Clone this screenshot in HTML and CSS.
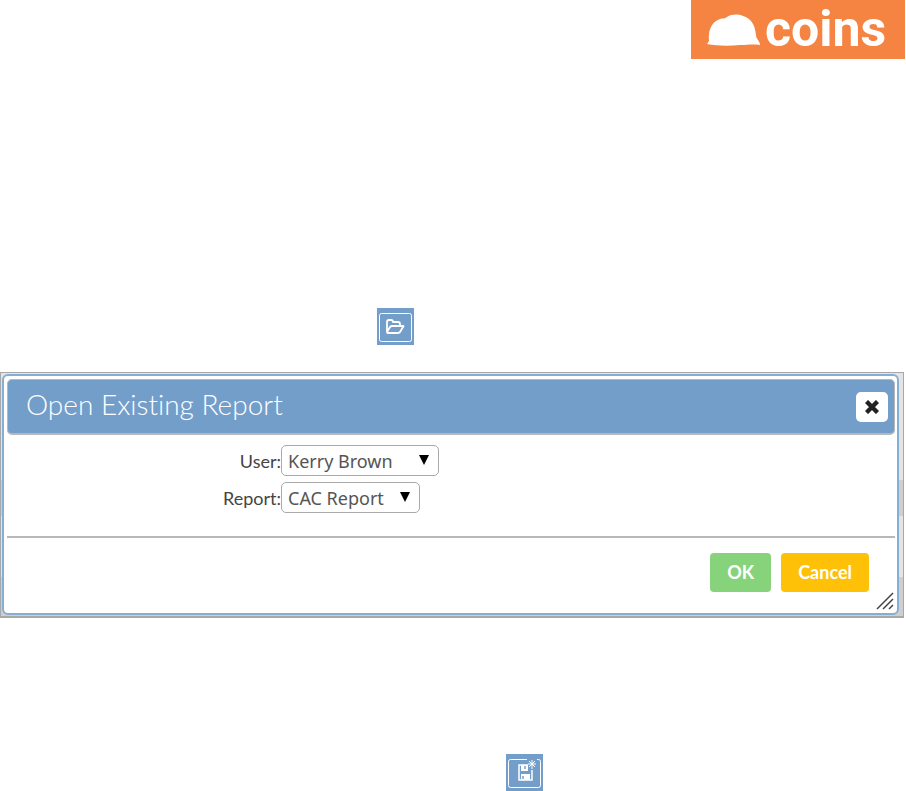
FILE: index.html
```
<!DOCTYPE html>
<html lang="en">
<head>
  <meta charset="UTF-8">
  <meta name="viewport" content="width=device-width, initial-scale=1.0">
  <title>Open Existing Report</title>
  <link rel="stylesheet" href="styles.css">
</head>
<body>
  <header class="page-header">
    <div class="logo">
      <svg class="helmet" viewBox="0 0 54 32" width="54" height="32" aria-hidden="true">
        <path fill="#fff" d="M0 30L2 27C1 17 4 8 13 5C16 4 18 5 20 3C25 0 31 0 36 2C44 4 48 11 49 21C49 25 53 27 53 31C46 30 40 31 33 31C22 32 10 32 0 30Z"/>
      </svg>
      <span class="logo-text">coins</span>
    </div>
  </header>

  <main>
    <div class="tool-row open-row">
      <button class="tool" type="button" aria-label="Open report">
        <svg viewBox="0 0 37 37" width="37" height="37" aria-hidden="true">
          <rect x="2.5" y="5.5" width="32" height="28" rx="2" fill="none" stroke="#fff"/>
          <path fill="none" stroke="#fff" stroke-width="1.8" stroke-linejoin="round" d="M10 24V14Q10 12 12 12H14Q16 12 16 14H21Q23 14 23 16V18M10 24L13 19Q14 18 15 18H26Q27 18 26 19L23 24Q22 25 21 25H11Q10 25 10 24Z"/>
        </svg>
      </button>
    </div>

    <div class="backdrop">
      <section class="dialog" role="dialog" aria-labelledby="title">
        <div class="titlebar">
          <h1 id="title">Open Existing Report</h1>
          <button class="close" type="button" aria-label="Close">
            <svg viewBox="0 0 14 14" width="14" height="14" aria-hidden="true">
              <path stroke="#222" stroke-width="4.4" d="M1.5 1.5L12.5 12.5M12.5 1.5L1.5 12.5"/>
            </svg>
          </button>
        </div>
        <form class="fields">
          <label for="user">User:</label>
          <div class="select">
            <select id="user" class="user"><option>Kerry Brown</option></select>
            <svg class="arrow" viewBox="0 0 10 10" width="10" height="10" aria-hidden="true"><path d="M0 0H10L5 10Z"/></svg>
          </div>
          <label for="report">Report:</label>
          <div class="select">
            <select id="report" class="report"><option>CAC Report</option></select>
            <svg class="arrow" viewBox="0 0 10 10" width="10" height="10" aria-hidden="true"><path d="M0 0H10L5 10Z"/></svg>
          </div>
        </form>
        <div class="buttons">
          <button class="btn ok" type="button">OK</button>
          <button class="btn cancel" type="button">Cancel</button>
        </div>
        <svg class="grip" viewBox="0 0 18 18" width="18" height="18" aria-hidden="true">
          <path fill="none" stroke="#444" stroke-width="1.5" d="M1 17L17 1M7 17L17 7M13 17L17 13"/>
        </svg>
      </section>
    </div>

    <div class="tool-row save-row">
      <button class="tool" type="button" aria-label="Save report as new">
        <svg viewBox="0 0 37 37" width="37" height="37" aria-hidden="true">
          <rect x="2.5" y="5.5" width="32" height="28" rx="2" fill="none" stroke="#fff"/>
          <path fill="none" stroke="#fff" stroke-width="1.5" d="M22 11H13V26H26V16"/>
          <path fill="#fff" d="M15 11H22V17H15ZM15 20H24V26H15Z"/>
          <path stroke="#749eca" stroke-width="1.5" d="M19 12V15M17 22V25"/>
          <path stroke="#749eca" stroke-width="3" d="M21 5.500H31"/>
          <path stroke="#fff" stroke-width="1" d="M26 6V15M22 10H30M23 7L29 13M29 7L23 13"/>
        </svg>
      </button>
    </div>
  </main>
</body>
</html>
```
FILE: styles.css
```
:root { --blue:#749eca; --orange:#f58442; --line:#b8b8b8; }
*{box-sizing:border-box;}
body{margin:0;background:#fff;color:#444;font-family:Lato,sans-serif;}
button,select{font-family:inherit;margin:0;}

.page-header{display:flex;justify-content:flex-end;padding-right:1px;}
.logo{display:flex;align-items:center;gap:4px;width:214px;height:59px;padding-left:16px;background:var(--orange);}
.logo-text{font-family:Roboto,sans-serif;font-size:50px;font-weight:700;line-height:59px;color:#fff;}

.tool-row{display:flex;}
.open-row{padding:249px 0 27px 377px;}
.save-row{padding:136px 0 0 506px;}
.tool{width:37px;height:37px;padding:0;border:0;background:var(--blue);}
.tool svg{display:block;}

.backdrop{margin-right:2px;padding:1px 4px 1px 1px;border:1px solid #a8a8a8;border-bottom-width:2px;background:linear-gradient(#e4e4e4 44%,#cfcfcf 44% 59%,#e4e4e4 59% 84%,#cfcfcf 84%);}
.dialog{position:relative;padding:3px 2px 3px 3px;border:2px solid #85add6;border-radius:6px;background:#fff;}
.titlebar{display:flex;align-items:center;justify-content:space-between;height:56px;padding:0 6px 0 18px;border:1px solid var(--line);border-bottom-width:2px;border-radius:5px;background:var(--blue);}
h1{margin:0;padding-bottom:6px;font-size:28px;font-weight:300;line-height:36px;font-variant-ligatures:none;color:#fff;}
.close{display:flex;align-items:center;justify-content:center;width:32px;height:30px;padding:0;border:0;border-radius:5px;background:#fff;}

.fields{display:grid;grid-template-columns:274px 1fr;align-items:center;row-gap:6px;padding:10px 0 23px;border-bottom:2px solid var(--line);}
.fields label{font-size:18px;text-align:right;}
.select{position:relative;justify-self:start;}
select{display:block;height:31px;padding:0 6px;appearance:none;border:1px solid #aaa;border-radius:5px;background:#fff;color:#555;font:18px "Noto Sans",sans-serif;}
.user{width:158px;}
.report{width:139px;}
.arrow{position:absolute;right:10px;top:10px;pointer-events:none;}

.buttons{display:flex;justify-content:flex-end;gap:10px;padding:15px 26px 18px 0;}
.btn{height:39px;padding:0 17px 2px;border:0;border-radius:4px;color:#fff;font-size:18px;font-weight:700;}
.ok{background:#87d37c;}
.cancel{background:#ffc107;}
.grip{position:absolute;right:3px;bottom:3px;}
```
